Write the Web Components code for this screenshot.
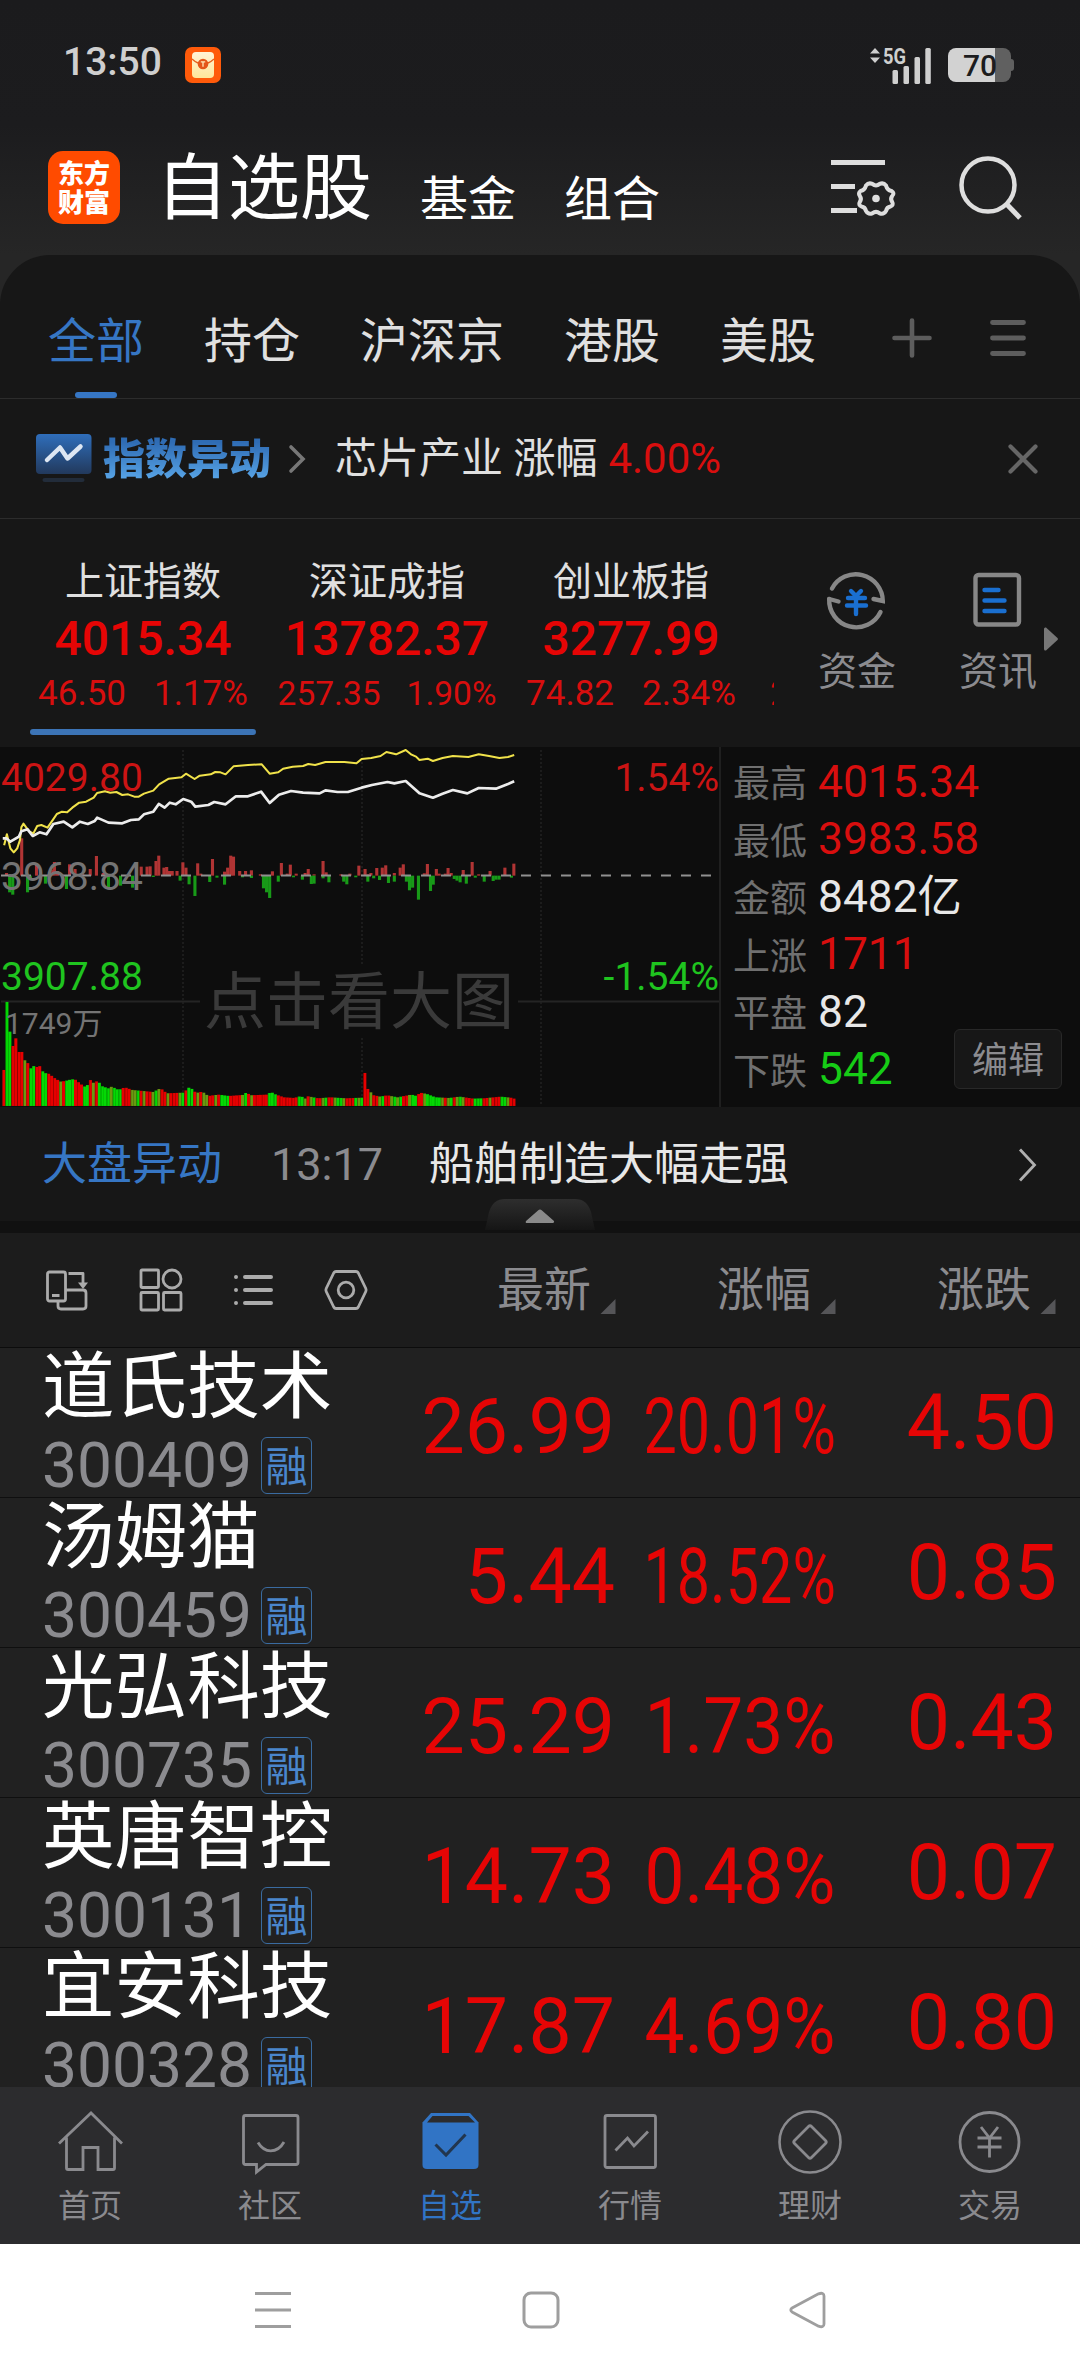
<!DOCTYPE html>
<html lang="zh-CN">
<head>
<meta charset="utf-8">
<title>自选股</title>
<style>
    body {
        margin: 0;
        width: 1080px; height: 2376px;
        overflow: hidden;
        display: flex;
        flex-direction: column;
        background: #1b1b1d;
        color: #e0e0e0;
        font-family: Roboto, "Noto Sans CJK SC", sans-serif;
        line-height: 1.17;
        --red: #e60505;
        --dim-red: #d80e0e;
        --green: #16cc16;
        --blue: #3676c4;
        --gray: #8b8b8f;
    }
    .top { background: linear-gradient(#1b1b1d 0, #1c1c1e 125px, #262626 255px); height: 305px; margin-bottom: -50px; flex: none; }
    .panel { background: #171717; border-radius: 50px 50px 0 0; flex: none; }
    stock-list { flex: 1; min-height: 0; }
</style>
</head>
<body>
    <div class="top">
        <status-bar time="13:50" battery="70"></status-bar>
        <app-header>
            <span slot="active">自选股</span>
            <span>基金</span>
            <span>组合</span>
        </app-header>
    </div>
    <div class="panel">
        <group-tabs>
            <group-tab active>全部</group-tab>
            <group-tab>持仓</group-tab>
            <group-tab>沪深京</group-tab>
            <group-tab>港股</group-tab>
            <group-tab>美股</group-tab>
        </group-tabs>
        <notice-strip label="指数异动" value="4.00%">芯片产业 涨幅</notice-strip>
        <index-strip>
            <index-card active name="上证指数" value="4015.34" change="46.50" percent="1.17%"></index-card>
            <index-card name="深证成指" value="13782.37" change="257.35" percent="1.90%" small></index-card>
            <index-card name="创业板指" value="3277.99" change="74.82" percent="2.34%"></index-card>
            <index-card name="" value="" change="22.51" percent="1.29%"></index-card>
            <quick-link slot="links" icon="fund">资金</quick-link>
            <quick-link slot="links" icon="doc">资讯</quick-link>
        </index-strip>
        <market-panel>
            <minute-chart></minute-chart>
            <stat-line slot="stats" label="最高" color="var(--dim-red)">4015.34</stat-line>
            <stat-line slot="stats" label="最低" color="var(--dim-red)">3983.58</stat-line>
            <stat-line slot="stats" label="金额">8482亿</stat-line>
            <stat-line slot="stats" label="上涨" color="var(--dim-red)">1711</stat-line>
            <stat-line slot="stats" label="平盘">82</stat-line>
            <stat-line slot="stats" label="下跌" color="var(--green)">542</stat-line>
        </market-panel>
        <news-line label="大盘异动" time="13:17">船舶制造大幅走强</news-line>
    </div>
    <list-header></list-header>
    <stock-list>
        <stock-row code="300409" price="26.99" percent="20.01%" change="4.50">道氏技术</stock-row>
        <stock-row code="300459" price="5.44" percent="18.52%" change="0.85">汤姆猫</stock-row>
        <stock-row code="300735" price="25.29" percent="1.73%" change="0.43">光弘科技</stock-row>
        <stock-row code="300131" price="14.73" percent="0.48%" change="0.07">英唐智控</stock-row>
        <stock-row code="300328" price="17.87" percent="4.69%" change="0.80">宜安科技</stock-row>
    </stock-list>
    <tab-bar>
        <tab-item icon="home">首页</tab-item>
        <tab-item icon="chat">社区</tab-item>
        <tab-item icon="box" active>自选</tab-item>
        <tab-item icon="trend">行情</tab-item>
        <tab-item icon="wealth">理财</tab-item>
        <tab-item icon="trade">交易</tab-item>
    </tab-bar>
    <system-nav></system-nav>

<script>
// name: [width, height, markup]
const ICONS = {
    packet: [36, 36, `<defs><linearGradient id="p" x2="0" y2="1"><stop stop-color="#fff3d6"/><stop offset="1" stop-color="#ffe69a"/></linearGradient></defs>
        <rect width="36" height="36" rx="7" fill="#ff5a0a"/><rect x="7" y="5" width="22" height="26" rx="4" fill="url(#p)"/>
        <path d="M7 12Q18 22 29 12" fill="none" stroke="#e8601c" stroke-width="1.3"/><circle cx="18" cy="17" r="5.3" fill="#e4571b"/>
        <path d="M15.8 14.8h4.4M18 14.8v5" stroke="#ffe9b8" stroke-width="1.3"/>`],
    signal: [62, 40, `<g fill="#cfcfcf"><path d="M0 8.5L5 3l5 5.5zM0 12.5L5 18l5-5.5z"/>
        <rect x="22.500" y="25" width="5.500" height="14" rx="1.500"/><rect x="33.500" y="21" width="5.500" height="18" rx="1.500"/>
        <rect x="44.500" y="12" width="5.500" height="27" rx="1.500"/><rect x="55.300" y="3" width="5.500" height="36" rx="1.500"/></g>
        <text x="13" y="18.500" font-family="Roboto, sans-serif" font-weight="700" font-size="22" textLength="23" lengthAdjust="spacingAndGlyphs" fill="#cfcfcf">5G</text>`],
    sort: [64, 56, `<path d="M1 6.500H55M1 30.500H25M1 54.500H27" transform="translate(0 -3)" stroke="#dedede" stroke-width="5"/>
        <path d="M42.300 27.400Q46 30.500 49.700 27.400Q53.500 25.800 56 29Q57.200 33.700 61.500 34.500Q65 36.500 62.200 39.500Q60 42.500 62.200 45.500Q64 48.500 60.500 50Q56.800 50.500 56 54.500Q53.500 58.500 49.700 56.800Q46 54 42.300 56.800Q38.500 58.500 36 54.500Q35.200 50.500 31.500 50Q28 48.500 29.800 45.500Q32 42.500 29.800 39.500Q28 36.500 30.500 34.500Q34.800 33.700 36 29Q38.500 25.800 42.300 27.400Z" transform="translate(0 -2.500)" fill="none" stroke="#dedede" stroke-width="4"/>
        <circle cx="46" cy="39.500" r="3.800" fill="#dedede"/>`],
    search: [66, 68, `<circle cx="30" cy="31" r="26.500" fill="none" stroke="#dedede" stroke-width="4.500"/><path d="M48.500 50L62 64" stroke="#dedede" stroke-width="5"/>`],
    plus: [40, 40, `<path d="M20 2.500V37.500M2.500 20H37.500" stroke="#5d5d5d" stroke-width="4.600" stroke-linecap="round"/>`],
    menu: [36, 38, `<path d="M2.500 3.500H33.500M2.500 19H33.500M2.500 34.500H33.500" stroke="#5d5d5d" stroke-width="4.800" stroke-linecap="round"/>`],
    notice: [56, 50, `<defs><linearGradient id="n" x2="0" y2="1"><stop stop-color="#2f6ebb"/><stop offset="1" stop-color="#22395c"/></linearGradient></defs>
        <rect width="55.500" height="40" rx="4" fill="url(#n)"/><path d="M11 26L24 13.500L31.500 24.500L44.500 12.500" fill="none" stroke="#dde6f2" stroke-width="4.500" stroke-linecap="round" stroke-linejoin="round"/>
        <rect x="6.500" y="44" width="42" height="4" rx="2" fill="#222c3a"/>`],
    chevron: [18, 30, `<path d="M2 3L14 15L2 27" fill="none" stroke="#777" stroke-width="3.600" stroke-linecap="round"/>`],
    more: [20, 36, `<path d="M2 2.500L16.500 18L2 33.500" fill="none" stroke="#b0b0b0" stroke-width="2.800"/>`],
    close: [32, 32, `<path d="M3.500 3.500L28.500 28.500M28.500 3.500L3.500 28.500" stroke="#666" stroke-width="4.200" stroke-linecap="round"/>`],
    fund: [62, 60, `<g fill="none" stroke="#878787" stroke-width="4.400" stroke-linecap="round">
        <path d="M6 18.500A27 27 0 0 1 56.800 31L47.500 29"/><path d="M3.200 29A27 27 0 0 0 54.500 42"/><path d="M3.200 29L12.500 31.500"/></g>
        <path d="M25 21L30 26L35 21M22 28H39M21 35.500H40M30 27V44" fill="none" stroke="#1a6fd0" stroke-width="4.400" stroke-linecap="round"/>`],
    doc: [50, 60, `<rect x="2.500" y="5" width="43.500" height="49.500" rx="3" fill="none" stroke="#878787" stroke-width="4.400"/>
        <path d="M11.500 20H25.500M11.500 30.500H31.500M11.500 41H31.500" stroke="#1a6fd0" stroke-width="4.400" stroke-linecap="round"/>`],
    scroll: [16, 26, `<path d="M1 3Q1 1 3 1.500L14.500 12Q15.500 13 14.500 14L3 24.500Q1 25 1 23Z" fill="#777"/>`],
    rotate: [44, 44, `<g fill="none" stroke="#ababab" stroke-width="2.800" stroke-linejoin="round"><rect x="2.500" y="4" width="18" height="29" rx="2"/>
        <path d="M7 27.500h7.500M20.500 22H38q3 0 3 3v13q0 3-3 3H16q-3 0-3-3v-5M23.500 5.500H38V16"/></g><path d="M33 14.500h10l-5 6.500z" fill="#ababab"/>`],
    grid: [44, 44, `<g fill="none" stroke="#ababab" stroke-width="2.800"><rect x="2" y="2" width="17.500" height="17.500" rx="1"/><rect x="2" y="24.500" width="17.500" height="17.500" rx="1"/>
        <rect x="24.500" y="24.500" width="17.500" height="17.500" rx="1"/><circle cx="33" cy="11" r="9"/></g>`],
    list: [42, 44, `<path d="M13 9H39M13 22H39M13 35H39M4 9v.1M4 22v.1M4 35v.1" stroke="#ababab" stroke-width="4" stroke-linecap="round"/>`],
    hex: [44, 44, `<g fill="none" stroke="#ababab" stroke-width="2.800" stroke-linejoin="round"><path d="M12 3.500H32Q33.500 3.500 34.300 5L41.800 20.500Q42.500 22 41.800 23.500L34.300 39Q33.500 40.500 32 40.500H12Q10.500 40.500 9.700 39L2.200 23.500Q1.500 22 2.200 20.500L9.700 5Q10.500 3.500 12 3.500Z"/><circle cx="22" cy="22" r="7.800"/></g>`],
    corner: [16, 16, `<path d="M15.500 0V15H.5Z" fill="#555558"/>`],
    home: [68, 68, `<path d="M3 37.500L35 7L66 37.500M10.500 31.500V62Q10.500 63.500 12 63.500H27V41.500H42V63.500H57Q58.500 63.500 58.500 62V31.500" fill="none" stroke="currentColor" stroke-width="2.800"/>`],
    chat: [68, 68, `<path d="M9.500 9.500H60Q62 9.500 62 11.500V56.500Q62 58.500 60 58.500H30L20.500 66V58.500H9.500Q7.500 58.500 7.500 56.500V11.500Q7.500 9.500 9.500 9.500ZM22 36.500Q27 44.800 34.700 44.800Q43 44.800 48 36" fill="none" stroke="currentColor" stroke-width="2.800"/>`],
    box: [68, 68, `<path d="M15 7H54L62.500 16.500V59Q62.500 63 58 63H11Q6.500 63 6.500 59V16.500Z" fill="currentColor"/><path d="M16.500 10H52.500L59 16.500H11Z" fill="#2c2c2e"/>
        <path d="M19.500 38.500L30 49L49.500 28.500" fill="none" stroke="#22364f" stroke-width="3"/>`],
    trend: [68, 68, `<rect x="9" y="9.500" width="50.500" height="52" rx="2" fill="none" stroke="currentColor" stroke-width="2.800"/><path d="M19.500 44.500L31.500 32L38 40L52 25.500" fill="none" stroke="currentColor" stroke-width="2.800"/>`],
    wealth: [68, 68, `<circle cx="34" cy="36" r="30.500" fill="none" stroke="currentColor" stroke-width="2.600"/><path d="M32.500 20.500Q34 19 35.500 20.500L49.500 34.500Q51 36 49.500 37.500L35.500 51.500Q34 53 32.500 51.500L18.500 37.500Q17 36 18.500 34.500Z" fill="none" stroke="currentColor" stroke-width="2.800"/>`],
    trade: [68, 68, `<circle cx="33.500" cy="36" r="29.500" fill="none" stroke="currentColor" stroke-width="2.800"/><path d="M25 21L33.500 32L42 21M21.500 32H45.500M21.500 41H45.500M33.500 32V51.500" fill="none" stroke="currentColor" stroke-width="2.800"/>`],
    recent: [38, 38, `<path d="M1 2.500H37M1 19H37M1 35.500H37" stroke="#9e9e9e" stroke-width="3.200"/>`],
    square: [38, 38, `<rect x="2" y="2" width="34" height="34" rx="7" fill="none" stroke="#9e9e9e" stroke-width="3"/>`],
    back: [38, 38, `<path d="M3.500 16.800L29.500 2.800Q35 1 35 5V33Q35 37 29.500 35.200L3.500 21.200Q0 19 3.500 16.800Z" fill="none" stroke="#9e9e9e" stroke-width="2.800"/>`]
};

class BaseElement extends HTMLElement {
    constructor() {
        super();
        this.attachShadow({ mode: 'open' });
    }

    connectedCallback() {
        this.shadowRoot.innerHTML = this.render();
    }

    attr(name) {
        return this.getAttribute(name) || '';
    }
}

class UiIcon extends BaseElement {
    render() {
        const [w, h, body] = ICONS[this.attr('name')];
        return `
        <style>
            :host { display: block; flex: none; width: ${w}px; height: ${h}px; }
            svg { display: block; overflow: visible; }
        </style>
        <svg width="${w}" height="${h}" viewBox="0 0 ${w} ${h}">${body}</svg>`;
    }
}

class StatusBar extends BaseElement {
    render() {
        return `
        <style>
            :host { display: flex; align-items: center; height: 126px; padding: 0 69px 0 63px; color: #cfcfcf; }
            .time { font-size: 39px; font-weight: 500; width: 122px; }
            .signal { margin-left: auto; }
            .battery {
                position: relative;
                width: 63px; height: 34px; margin: 4px 0 0 16px;
                border-radius: 8px;
                background: linear-gradient(90deg, #d2d2d2 47px, #606060 47px);
                color: #1c1c1e; font-size: 30px; line-height: 35px; font-weight: 500; text-align: center;
                text-indent: 1px;
            }
            .battery::after {
                content: ''; position: absolute; right: -3px; top: 11px;
                width: 3px; height: 12px; border-radius: 0 3px 3px 0; background: #606060;
            }
            ui-icon { margin-top: 4px; }
        </style>
        <div class="time">${this.attr('time')}</div>
        <ui-icon name="packet"></ui-icon>
        <ui-icon class="signal" name="signal"></ui-icon>
        <div class="battery">${this.attr('battery')}</div>`;
    }
}

class AppHeader extends BaseElement {
    render() {
        return `
        <style>
            :host { display: flex; height: 129px; align-items: center; padding: 0 56px 0 48px; color: #fff; }
            .logo {
                width: 72px; height: 73px; margin: -7px 36px 0 0; padding-top: 6px; box-sizing: border-box;
                border-radius: 15px; background: #ff4b00; color: #fff;
                font: 900 26px/29px "Noto Sans CJK SC", sans-serif; text-align: center;
            }
            .tabs { display: flex; gap: 48px; align-items: baseline; font-size: 48px; line-height: 80px; margin-top: 4px; }
            .active { font-size: 72px; }
            ::slotted(span:not([slot])) { padding-top: 3px; transform: translateY(3px); }
            .sort { margin: -7px 64px 0 auto; }
            .search { margin-top: -6px; }
        </style>
        <div class="logo">东方<br>财富</div>
        <div class="tabs"><div class="active"><slot name="active"></slot></div><slot></slot></div>
        <ui-icon class="sort" name="sort"></ui-icon>
        <ui-icon class="search" name="search"></ui-icon>`;
    }
}

class GroupTabs extends BaseElement {
    render() {
        return `
        <style>
            :host { display: flex; height: 143px; padding: 0 54px 0 48px; gap: 60px; border-bottom: 1px solid #2c2c2c; }
            .tools { display: flex; align-items: center; gap: 58px; margin: 24px 0 0 auto; height: 118px; }
        </style>
        <slot></slot>
        <div class="tools"><ui-icon name="plus"></ui-icon><ui-icon name="menu"></ui-icon></div>`;
    }
}

class GroupTab extends BaseElement {
    render() {
        return `
        <style>
            :host { display: flex; flex-direction: column; align-items: center; justify-content: space-between; height: 143px; font-size: 48px; }
            :host([active]) { color: var(--blue); }
            .label { line-height: 60px; margin-top: 57px; }
            :host([active]) .bar { width: 42px; height: 6px; border-radius: 3px; background: var(--blue); }
        </style>
        <div class="label"><slot></slot></div><div class="bar"></div>`;
    }
}

class NoticeStrip extends BaseElement {
    render() {
        return `
        <style>
            :host { display: flex; align-items: center; height: 119px; padding: 0 41px 0 36px; border-bottom: 1px solid #2c2c2c; font-size: 42px; }
            .label {
                margin: 2px 18px 0 11px; font-weight: 900; line-height: 56px;
                background: linear-gradient(#2f6cb4 10px, #56a2e4 46px); -webkit-background-clip: text; background-clip: text; color: transparent;
            }
            .text { margin-left: 28px; white-space: pre; }
            .value { color: var(--dim-red); margin-left: 11px; }
            .close { margin-left: auto; }
        </style>
        <ui-icon name="notice"></ui-icon>
        <div class="label">${this.attr('label')}</div>
        <ui-icon name="chevron"></ui-icon>
        <div class="text"><slot></slot></div>
        <div class="value">${this.attr('value')}</div>
        <ui-icon class="close" name="close"></ui-icon>`;
    }
}

class IndexStrip extends BaseElement {
    render() {
        return `
        <style>
            :host { display: flex; height: 228px; }
            .cards { display: flex; gap: 18px; width: 744px; padding-left: 30px; overflow: hidden; }
            .links { display: flex; gap: 63px; margin-left: 44px; padding-top: 51px; }
            .next { margin: 107px 0 0 6px; }
        </style>
        <div class="cards"><slot></slot></div>
        <div class="links"><slot name="links"></slot></div>
        <ui-icon class="next" name="scroll"></ui-icon>`;
    }
}

class IndexCard extends BaseElement {
    render() {
        return `
        <style>
            :host { display: flex; flex-direction: column; align-items: center; flex: none; width: 226px; height: 216px; white-space: nowrap; }
            .name { font-size: 39px; line-height: 50px; height: 50px; margin-top: 38px; }
            .value { font-size: 48px; line-height: 60px; height: 60px; margin-top: 2px; font-weight: 500; color: var(--red); }
            .delta { display: flex; gap: 28px; font-size: 35px; line-height: 46px; margin-top: 2px; color: var(--dim-red); }
            :host([small]) .delta { font-size: 33.500px; gap: 26px; }
            .bar { width: 226px; height: 6px; border-radius: 3px; margin-top: auto; }
            :host([active]) .bar { background: #3c74b6; }
        </style>
        <div class="name">${this.attr('name')}</div>
        <div class="value">${this.attr('value')}</div>
        <div class="delta"><span>${this.attr('change')}</span><span>${this.attr('percent')}</span></div>
        <div class="bar"></div>`;
    }
}

class QuickLink extends BaseElement {
    render() {
        return `
        <style>
            :host { display: flex; flex-direction: column; align-items: center; width: 78px; font-size: 39px; line-height: 50px; color: var(--gray); }
            .label { margin-top: 17px; }
        </style>
        <ui-icon name="${this.attr('icon')}"></ui-icon>
        <div class="label"><slot></slot></div>`;
    }
}

class MarketPanel extends BaseElement {
    render() {
        return `
        <style>
            :host { display: flex; position: relative; height: 360px; background: #0d0d0d; }
            .stats { flex: 1; border-left: 2px solid #1f1f1f; padding: 7px 0 0 12px; box-sizing: border-box; }
            .edit {
                position: absolute; right: 18px; bottom: 18px;
                width: 106px; height: 58px; border: 1px solid #282828; border-radius: 6px;
                background: #171717; color: var(--gray); font-size: 36px; line-height: 62px; text-align: center;
            }
        </style>
        <slot></slot>
        <div class="stats"><slot name="stats"></slot></div>
        <div class="edit">编辑</div>`;
    }
}

class StatLine extends BaseElement {
    render() {
        return `
        <style>
            :host { display: flex; align-items: center; height: 57.500px; font-size: 44.300px; color: ${this.attr('color') || '#e8e8e8'}; }
            .label { font-size: 37px; color: #707070; margin: 4px 11px 0 0; }
        </style>
        <div class="label">${this.attr('label')}</div><div><slot></slot></div>`;
    }
}

// Series are kept in a 2091 x 1080 space and squeezed to 720 x 360
const AVERAGE = '12,295 20,262 30,304 40,316 50,304 58,279 62,241 68,230 76,241 86,254 97,259 108,237 120,234 138,242 150,224 165,201 180,194 195,196 210,182 230,167 250,164 272,152 282,138 305,133 320,137 338,135 355,144 372,142 390,149 403,149 418,140 445,131 462,112 490,95 515,92 527,91 540,80 565,96 580,86 612,82 625,75 640,76 655,82 678,58 720,54 760,52 783,80 808,76 822,65 850,59 880,57 895,51 915,54 945,45 1000,45 1035,49 1050,36 1078,33 1105,27 1122,15 1150,22 1178,9 1195,23 1208,29 1218,39 1242,35 1257,42 1285,33 1315,27 1360,30 1390,22 1420,27 1450,33 1475,30 1493,24';
const PRICE = '8,274 18,274 30,284 45,275 55,269 62,253 80,247 95,267 115,256 135,262 155,231 185,224 210,241 232,224 255,231 275,222 282,212 315,227 355,229 380,219 403,217 418,202 445,194 461,171 478,182 493,167 510,172 532,156 555,164 567,179 605,174 622,165 655,172 685,148 720,148 758,134 783,168 810,143 845,132 880,137 928,139 945,130 980,135 1010,135 1050,122 1080,114 1125,105 1145,109 1178,102 1200,122 1218,139 1257,152 1285,140 1315,129 1357,139 1390,123 1440,125 1475,111 1493,103';
const FLOW_UP = '19:8 63:112 106:34 150:18 158:41 167:14 202:34 218:20 240:6 262:20 280:59 300:8 410:27 427:27 436:28 453:44 461:60 476:24 484:26 492:14 500:14 514:14 531:40 540:24 574:37 583:6 617:50 652:12 661:24 670:60 678:57 696:14 713:14 730:16 756:4 791:13 817:38 834:6 843:33 860:6 886:8 895:20 912:4 938:44 947:10 990:4 1016:6 1042:30 1060:20 1068:4 1077:8 1094:23 1110:24 1120:31 1145:8 1162:24 1171:34 1232:7 1241:35 1267:20 1275:6 1293:6 1301:23 1310:8 1345:17 1371:41 1390:4 1423:14 1466:24 1492:36';
const FLOW_DOWN = '28:50 37:57 80:50 88:12 132:24 193:40 315:36 350:30 385:36 445:4 523:15 549:26 566:61 609:19 630:6 652:27 704:5 730:7 765:38 774:50 783:67 808:18 852:5 878:12 904:25 912:24 938:8 955:20 998:18 1007:26 1033:5 1068:18 1085:8 1102:13 1128:22 1145:18 1180:18 1189:44 1198:36 1215:72 1250:46 1258:27 1319:10 1327:15 1336:20 1354:24 1380:6 1406:18 1432:16 1440:12 1449:12 1485:6';
const VOLUME = '7,108 16,312 25,223 33,180 42,204 51,162 59,162 68,136 77,128 86,111 94,120 105,116 112,120 120,103 129,98 140,96 150,86 160,80 172,73 185,75 195,78 212,81 225,70 240,58 250,63 260,81 269,66 279,78 290,60 310,53 320,58 340,48 358,56 380,48 400,46 440,42 462,53 480,38 530,40 540,53 549,57 557,44 570,40 583,43 600,30 630,34 660,30 700,33 713,42 720,32 770,34 783,42 792,36 820,26 850,24 870,30 880,21 890,29 920,23 955,26 1000,23 1050,25 1057,99 1066,51 1077,33 1100,28 1120,32 1150,26 1190,34 1205,30 1215,40 1235,36 1260,26 1300,24 1330,28 1370,22 1400,23 1450,28 1485,24 1494,18';
const VOLUME_COLORS = 'rggrrrrorggrrggrrrrorgggrrrggrorggggogggrrroogrorrogorrorrrogr' + 'ggroroorrorgggrrrrogrorrrrrgggrrrrrrrggorogrrogrroggorrrgogrrorrogrrogogrroggrrogggggorogrogorrrgggrrorrrggorrogrrrror';

class MinuteChart extends BaseElement {
    flow(data, color, sign) {
        return data.split(' ').map(p => {
            const [x, h] = p.split(':').map(Number);
            return `<rect x="${x - 4.5}" y="${sign > 0 ? 386 - h : 386}" width="9" height="${h}" fill="${color}"/>`;
        }).join('');
    }

    volume() {
        const pts = VOLUME.split(' ').map(p => p.split(',').map(Number));
        const fill = { r: '#e60000', g: '#04d904', o: '#6a9a10' };
        let out = '';
        for (let i = 0; i < 172; i++) {
            const x = 7 + i * 8.66;
            let k = pts.findIndex(p => p[0] > x);
            if (k < 0) k = pts.length - 1;
            if (k < 1) k = 1;
            const [x0, h0] = pts[k - 1];
            const [x1, h1] = pts[k];
            const t = Math.max(0, Math.min(1, (x - x0) / (x1 - x0)));
            // the tall bars keep their own height, the rest follow the slope
            const h = Math.abs(h1 - h0) > 40 ? (t < 0.5 ? h0 : h1) : h0 + (h1 - h0) * t;
            const c = VOLUME_COLORS[i] || 'r';
            out += `<rect x="${x.toFixed(1)}" y="${(1077 - h).toFixed(1)}" width="8.800" height="${h.toFixed(1)}" fill="${fill[c]}"/>`;
            if (i % 2) out += `<rect x="${x.toFixed(1)}" y="${(1077 - h).toFixed(1)}" width="2" height="${h.toFixed(1)}" fill="#000" opacity=".3"/>`;
        }
        return out;
    }

    render() {
        return `
        <style>
            :host { display: grid; width: 719px; height: 360px; font-size: 39px; line-height: 46px; }
            svg, .labels { grid-area: 1 / 1; }
            .labels { display: flex; flex-direction: column; padding: 8px 0 0 1px; }
            .row { display: flex; justify-content: space-between; height: 46px; }
            .up { color: #cb1414; }
            .flat { color: #747474; margin-top: 53px; }
            .down { color: #1fc41f; margin-top: 54px; }
            .vol { color: #747474; font-size: 30px; line-height: 36px; padding-left: 4px; margin-top: 6px; }
            .hint {
                position: absolute; left: 200px; top: 218px; width: 318px; height: 73px;
                background: #0d0d0d; color: #3a3a3a; font-size: 62px; line-height: 76px; text-align: center;
            }
        </style>
        <svg width="719" height="360">
            <path d="M1 254.500H719" stroke="#242424" stroke-width="2"/>
            <path d="M183 3V359M362 3V359M541 3V359" stroke="#222" stroke-width="1.500" stroke-dasharray="2 2"/>
            <g transform="scale(.3444 .3333)">
                ${this.flow(FLOW_UP, '#b03434', 1)}${this.flow(FLOW_DOWN, '#189a18', -1)}
            </g>
            <path d="M1 128.500H712" stroke="#909090" stroke-width="2" stroke-dasharray="10 10"/>
            <g transform="scale(.3444 .3333)">
                ${this.volume()}
                <g fill="none" stroke-linejoin="round">
                    <polyline points="${AVERAGE}" stroke="#f0e24a" stroke-width="6"/>
                    <polyline points="${PRICE}" stroke="#ececec" stroke-width="8"/>
                </g>
            </g>
        </svg>
        <div class="labels">
            <div class="row up"><span>4029.80</span><span>1.54%</span></div>
            <div class="row flat"><span>3968.84</span></div>
            <div class="row down"><span>3907.88</span><span>-1.54%</span></div>
            <div class="vol">1749万</div>
        </div>
        <div class="hint">点击看大图</div>`;
    }
}

class NewsLine extends BaseElement {
    render() {
        return `
        <style>
            :host { display: block; position: relative; height: 126px; font-size: 45px; }
            .row { display: flex; align-items: center; height: 114px; padding: 3px 42px 0 42px; box-sizing: border-box; background: #171717; }
            .label { color: var(--blue); width: 229px; }
            .time { color: var(--gray); width: 158px; }
            .text { color: #e8e8e8; }
            ui-icon { margin: -2px 0 0 auto; }
            .gap { height: 12px; background: #111; }
            .handle { position: absolute; left: 485px; top: 92px; }
        </style>
        <div class="row">
            <div class="label">${this.attr('label')}</div>
            <div class="time">${this.attr('time')}</div>
            <div class="text"><slot></slot></div>
            <ui-icon name="more"></ui-icon>
        </div>
        <div class="gap"></div>
        <svg class="handle" width="110" height="31">
            <defs><linearGradient id="h" x2="0" y2="1"><stop stop-color="#2e2e2e"/><stop offset="1" stop-color="#151515"/></linearGradient></defs>
            <path d="M0 31L4 13Q8 0 20 0H90Q102 0 106 13L110 31Z" fill="url(#h)"/>
            <path d="M41 22L53 11.500Q55 9.500 57 11.500L69 22Q69.500 24 67 24H42Q40 24 41 22Z" fill="#8b8b8b"/>
        </svg>`;
    }
}

class ListHeader extends BaseElement {
    render() {
        const cols = ['最新', '涨幅', '涨跌'].map(t => `<div class="col"><span>${t}</span><ui-icon name="corner"></ui-icon></div>`).join('');
        return `
        <style>
            :host { display: flex; align-items: center; flex: none; height: 114px; padding: 0 24px 0 45px; border-bottom: 1px solid #0c0c0c; background: #1c1c1c; }
            .icons { display: flex; gap: 49.500px; }
            .cols { display: flex; gap: 104px; margin-left: auto; }
            .col { display: flex; align-items: flex-end; gap: 9px; width: 116px; justify-content: flex-end; white-space: nowrap; font-size: 47px; line-height: 58px; color: var(--gray); }
            .col span { flex: none; }
            .col ui-icon { margin-bottom: 4px; }
        </style>
        <div class="icons"><ui-icon name="rotate"></ui-icon><ui-icon name="grid"></ui-icon><ui-icon name="list"></ui-icon><ui-icon name="hex"></ui-icon></div>
        <div class="cols">${cols}</div>`;
    }
}

class StockList extends BaseElement {
    render() {
        return `
        <style>:host { display: block; overflow: hidden; background: #212121; }</style>
        <slot></slot>`;
    }
}

class StockRow extends BaseElement {
    render() {
        const percent = this.attr('percent');
        // long percents are squeezed into the column
        const squeeze = percent.length > 5 ? 0.77 : 0.925;
        return `
        <style>
            :host { display: flex; height: 149px; padding: 0 23px 0 42px; border-bottom: 1px solid #0f0f0f; background: #212121; color: var(--red); font-size: 77px; line-height: 90px; }
            .stock { width: 318px; color: #fff; white-space: nowrap; }
            .name { font-size: 72.600px; line-height: 79px; height: 79px; }
            .sub { display: flex; align-items: center; gap: 9px; height: 77px; }
            .code { font-size: 62.300px; color: var(--gray); line-height: 78px; }
            .tag { width: 49px; height: 55px; border: 1.500px solid #3a6ba0; border-radius: 6px; color: #4a86cc; font-size: 42px; line-height: 59px; text-align: center; }
            .price { width: 255px; text-align: right; margin-top: 34px; }
            .percent { display: flex; justify-content: flex-end; width: 221px; margin-top: 34px; white-space: nowrap; }
            .percent span { flex: none; transform: scaleX(${squeeze}); transform-origin: right; }
            .change { flex: 1; text-align: right; margin-top: 30px; }
        </style>
        <div class="stock">
            <div class="name"><slot></slot></div>
            <div class="sub"><div class="code">${this.attr('code')}</div><div class="tag">融</div></div>
        </div>
        <div class="price">${this.attr('price')}</div>
        <div class="percent"><span>${percent}</span></div>
        <div class="change">${this.attr('change')}</div>`;
    }
}

class TabBar extends BaseElement {
    render() {
        return `
        <style>:host { display: grid; grid-template-columns: repeat(6, 1fr); flex: none; height: 157px; background: #2c2c2e; }</style>
        <slot></slot>`;
    }
}

class TabItem extends BaseElement {
    render() {
        return `
        <style>
            :host { display: flex; flex-direction: column; align-items: center; padding-top: 19px; color: #8a8a8e; font-size: 32px; line-height: 40px; }
            :host([active]) { color: #3174c5; }
            .label { margin-top: 12px; }
        </style>
        <ui-icon name="${this.attr('icon')}"></ui-icon>
        <div class="label"><slot></slot></div>`;
    }
}

class SystemNav extends BaseElement {
    render() {
        return `
        <style>:host { display: flex; align-items: center; flex: none; height: 132px; padding: 0 253px 0 254px; justify-content: space-between; box-sizing: border-box; background: #fff; }</style>
        <ui-icon name="recent"></ui-icon><ui-icon name="square"></ui-icon><ui-icon name="back"></ui-icon>`;
    }
}

customElements.define('ui-icon', UiIcon);
customElements.define('status-bar', StatusBar);
customElements.define('app-header', AppHeader);
customElements.define('group-tabs', GroupTabs);
customElements.define('group-tab', GroupTab);
customElements.define('notice-strip', NoticeStrip);
customElements.define('index-strip', IndexStrip);
customElements.define('index-card', IndexCard);
customElements.define('quick-link', QuickLink);
customElements.define('market-panel', MarketPanel);
customElements.define('stat-line', StatLine);
customElements.define('minute-chart', MinuteChart);
customElements.define('news-line', NewsLine);
customElements.define('list-header', ListHeader);
customElements.define('stock-list', StockList);
customElements.define('stock-row', StockRow);
customElements.define('tab-bar', TabBar);
customElements.define('tab-item', TabItem);
customElements.define('system-nav', SystemNav);
</script>
</body>
</html>
